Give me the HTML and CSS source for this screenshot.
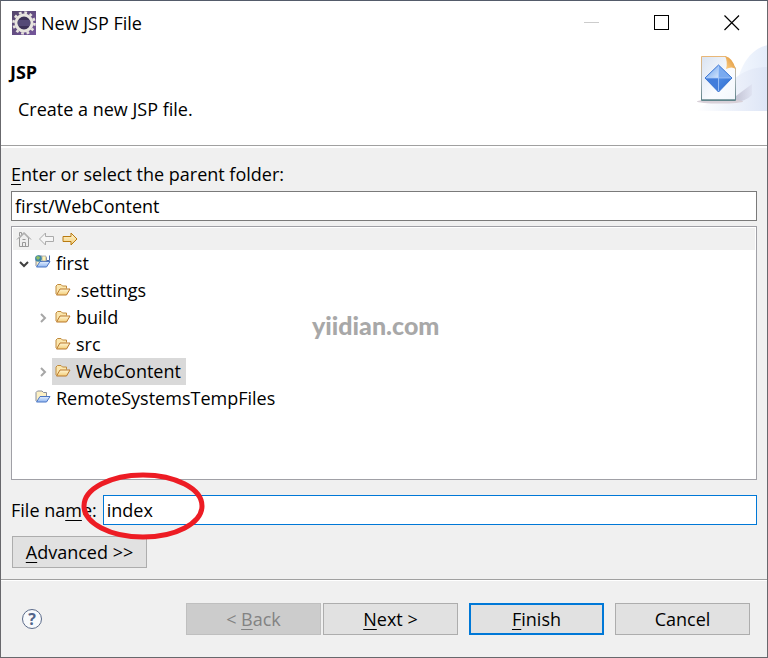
FILE: index.html
```html
<!DOCTYPE html>
<html lang="en">
<head>
<meta charset="utf-8">
<title>New JSP File</title>
<link rel="stylesheet" href="styles.css">
</head>
<body>
<svg class="defs" aria-hidden="true">
  <defs>
    <linearGradient id="gold" x1="0" y1="0" x2="0" y2="1"><stop offset="0" stop-color="#fff6d5"/><stop offset="1" stop-color="#f3cd78"/></linearGradient>
    <linearGradient id="blue" x1="0" y1="0" x2="0" y2="1"><stop offset="0" stop-color="#e3efff"/><stop offset="1" stop-color="#8fb5f0"/></linearGradient>
    <symbol id="folder" viewBox="0 0 16 12">
      <path d="M1 10.500V2.500L2.500 1H6L7.500 2.500H11.500V5" fill="#fbe6ad" stroke="#c08a3c"/>
      <path d="M1.500 11.500 5 5.500H15L11.500 11.500Z" fill="url(#gold)" stroke="#b9782c" stroke-linejoin="round"/>
    </symbol>
    <symbol id="project" viewBox="0 0 16 13">
      <path d="M1 11V2.500L2.500 1H7L8.500 2.500H11.500V6" fill="#fdf0c4" stroke="#8a8f9c"/>
      <path d="M1.500 12 5 6.500H15L11.500 12Z" fill="url(#blue)" stroke="#4b76c4" stroke-linejoin="round"/>
    </symbol>
    <symbol id="closed" viewBox="0 0 8 10"><path d="M2 1 6 5 2 9" fill="none" stroke="#a6a6a6" stroke-width="2"/></symbol>
  </defs>
</svg>
<main class="dialog">
  <header class="titlebar">
    <svg class="app-icon" viewBox="0 0 24 24" aria-hidden="true">
      <defs><linearGradient id="app" x1="0" y1="0" x2="1" y2="1"><stop offset="0" stop-color="#54466a"/><stop offset="1" stop-color="#75569c"/></linearGradient></defs>
      <rect width="24" height="24" fill="url(#app)"/>
      <circle cx="12" cy="12" r="10.500" fill="none" stroke="#e8e5df" stroke-width="2.500" stroke-dasharray="2.750 2.748"/>
      <circle cx="12" cy="12" r="8" fill="#3c3157" stroke="#e8e5df" stroke-width="3"/>
      <path d="M6 10H18M5.500 12H18.500M6 14H18" stroke="#6d6396"/>
    </svg>
    <h1 class="title">New JSP File</h1>
    <button class="caption" aria-label="Minimize" disabled><svg viewBox="0 0 16 16"><path d="M0 7.500H15" stroke="#ccc"/></svg></button>
    <button class="caption" aria-label="Maximize"><svg viewBox="0 0 16 16"><rect x=".5" y=".5" width="14" height="14" fill="none" stroke="#000"/></svg></button>
    <button class="caption" aria-label="Close"><svg viewBox="0 0 16 16"><path d="M.5.5 15 15M15 .5.5 15" stroke="#000" stroke-width="1.200"/></svg></button>
  </header>
  <section class="banner">
    <div class="intro">
      <h2 class="heading">JSP</h2>
      <p class="summary">Create a new JSP file.</p>
    </div>
    <svg class="banner-art" viewBox="0 0 77 70" aria-hidden="true">
      <defs>
        <linearGradient id="swoosh" x1="0" x2="1"><stop offset="0" stop-color="#fff"/><stop offset="1" stop-color="#dde5f6"/></linearGradient>
        <linearGradient id="swoosh2" x1="0" x2="1"><stop offset="0" stop-color="#f4f8fe"/><stop offset="1" stop-color="#e4ecfa"/></linearGradient>
        <linearGradient id="shade" x1="0" x2="1"><stop offset="0" stop-color="#aaa8bd"/><stop offset="1" stop-color="#dcdeee"/></linearGradient>
        <linearGradient id="page" x1="0" y1="0" x2="1" y2="1"><stop offset="0" stop-color="#d9e3f1"/><stop offset=".6" stop-color="#fafcff"/><stop offset="1" stop-color="#f3f7fc"/></linearGradient>
        <linearGradient id="edge" x1="0" y1="0" x2="0" y2="1"><stop offset="0" stop-color="#e9b777"/><stop offset=".5" stop-color="#a9b3b6"/><stop offset="1" stop-color="#5e8289"/></linearGradient>
        <linearGradient id="curl" x1="0" y1="1" x2="1" y2="0"><stop offset="0" stop-color="#ffd28a"/><stop offset="1" stop-color="#d98b2c"/></linearGradient>
        <linearGradient id="gemA" x1="0" y1="0" x2="1" y2="1"><stop offset="0" stop-color="#5f9aec"/><stop offset="1" stop-color="#d3e5fc"/></linearGradient>
        <linearGradient id="gemB" x1="0" y1="0" x2="1" y2="1"><stop offset="0" stop-color="#4f8be4"/><stop offset="1" stop-color="#2a69cc"/></linearGradient>
      </defs>
      <path d="M44 66C44 24 60 3 78 0V66Z" fill="url(#swoosh2)"/>
      <path d="M6 66C35 50 42 22 78 22V66Z" fill="url(#swoosh)"/>
      <path d="M46 56V51L62 39V50Q56 56 46 57Z" fill="url(#shade)" opacity=".6"/>
      <ellipse cx="30" cy="56.500" rx="23" ry="2" fill="#d8d0d8"/>
      <path d="M11.500 11.500H36L45.500 23V55.500H11.500Z" fill="url(#page)" stroke="url(#edge)"/>
      <path d="M12 55H45" stroke="#60858b" stroke-width="1.500"/>
      <path d="M35 11Q43 13 45.500 24Q42 21 36 24Q38 17 35 11Z" fill="url(#curl)"/>
      <path d="M28.500 20V33H15Z" fill="url(#gemA)"/>
      <path d="M28.500 20 42 33H28.500Z" fill="#79aaf0"/>
      <path d="M15 33H28.500V47Z" fill="#427ddb"/>
      <path d="M28.500 33H42L28.500 47Z" fill="url(#gemB)"/>
      <path d="M28.500 20 42 33 28.500 47 15 33Z" fill="none" stroke="#3a75d3"/>
      <path d="M16 33H41M28.500 21V46" stroke="#a6c9fb" stroke-width=".7"/>
    </svg>
  </section>
  <section class="content">
    <label class="label" for="parent"><u>E</u>nter or select the parent folder:</label>
    <input class="field" id="parent" type="text" value="first/WebContent">
    <div class="browser">
      <div class="toolbar">
        <button class="tool" aria-label="Home" disabled><svg viewBox="0 0 16 16"><path d="M3.500 7V15.500H12.500V7L8 2.500Z" fill="#eee" stroke="#999"/><path d="M1 8.500 8 1.500 15 8.500M3.500 5V1.500H5.500V3.500" fill="none" stroke="#999"/><path d="M6.500 15V11.500H9.500V15M6.500 8.500H9.500" fill="none" stroke="#999"/></svg></button>
        <button class="tool" aria-label="Back" disabled><svg viewBox="0 0 16 16"><path d="M.5 8 6.500 2V5.500H14.500V10.500H6.500V14Z" fill="#f5f5f5" stroke="#aaa" stroke-linejoin="round"/></svg></button>
        <button class="tool" aria-label="Forward"><svg viewBox="0 0 16 16"><path d="M15 8 9 2V5.500H1V10.500H9V14Z" fill="url(#gold)" stroke="#b87a10" stroke-linejoin="round"/></svg></button>
      </div>
      <ul class="tree">
        <li>
          <div class="row"><svg class="twisty" viewBox="0 0 12 10"><path d="M2 3 6 7 10 3" fill="none" stroke="#404040" stroke-width="2"/></svg><span class="item"><svg class="node-icon raised" viewBox="0 0 16 13"><use href="#project"/><path d="M7 1H11V6H7Z" fill="#fff3b0" stroke="#8f98aa" stroke-width=".7"/><path d="M14.500 .5V5.500H12" fill="none" stroke="#4c6fae"/><circle cx="3.500" cy="3.500" r="3.300" fill="#3f86a8"/><path d="M2 1Q5 1 5 3L3 5 1 3Z" fill="#8fbd63"/></svg>first</span></div>
          <ul class="branch">
            <li><div class="row"><span class="twisty"></span><span class="item"><svg class="node-icon"><use href="#folder"/></svg>.settings</span></div></li>
            <li><div class="row"><svg class="twisty"><use href="#closed"/></svg><span class="item"><svg class="node-icon"><use href="#folder"/></svg>build</span></div></li>
            <li><div class="row"><span class="twisty"></span><span class="item"><svg class="node-icon"><use href="#folder"/></svg>src</span></div></li>
            <li><div class="row"><svg class="twisty"><use href="#closed"/></svg><span class="item selected"><svg class="node-icon"><use href="#folder"/></svg>WebContent</span></div></li>
          </ul>
        </li>
        <li><div class="row"><span class="twisty"></span><span class="item"><svg class="node-icon raised"><use href="#project"/></svg>RemoteSystemsTempFiles</span></div></li>
      </ul>
      <span class="watermark">yiidian.com</span>
    </div>
    <div class="file-row">
      <label class="label" for="file">File na<u>m</u>e:</label>
      <input class="field active" id="file" type="text" value="index">
      <svg class="marker" viewBox="0 0 124 70" aria-hidden="true"><ellipse cx="62" cy="35" rx="59" ry="31" fill="none" stroke="#ed1c24" stroke-width="5"/></svg>
    </div>
    <button class="button advanced"><span><u>A</u>dvanced &gt;&gt;</span></button>
  </section>
  <footer class="footer">
    <button class="help" aria-label="Help">?</button>
    <div class="steps">
      <button class="button" disabled><span>&lt; <u>B</u>ack</span></button>
      <button class="button"><span><u>N</u>ext &gt;</span></button>
    </div>
    <button class="button primary"><span><u>F</u>inish</span></button>
    <button class="button"><span>Cancel</span></button>
  </footer>
</main>
</body>
</html>
```
FILE: styles.css
```css
* { box-sizing: border-box; }
body, h1, h2, p, ul { margin: 0; padding: 0; }
body, button, input {
  font-family: "Open Sans", "Noto Sans", sans-serif;
  font-size: 18px;
  line-height: 24px;
  color: #000;
}
ul { list-style: none; }
svg { display: block; }
button { padding: 0; border: 0; background: none; }
u { text-decoration-thickness: 1px; text-underline-offset: 3px; text-decoration-skip-ink: none; }
.defs { position: absolute; width: 0; height: 0; }

.dialog {
  display: flex;
  flex-direction: column;
  min-height: 100vh;
  border: 1px solid #68686c;
  border-top-color: #535b6a;
  background: #f0f0f0;
}

.titlebar { display: flex; align-items: center; height: 43px; padding-left: 11px; background: #fff; }
.app-icon { width: 24px; height: 24px; }
.title { flex: 1; padding-left: 5px; font-size: 18px; font-weight: 400; }
.caption { display: grid; place-items: center; width: 70px; height: 44px; }
.caption svg { width: 16px; height: 16px; }

.banner {
  display: flex;
  justify-content: space-between;
  height: 102px;
  background: #fff;
  border-bottom: 1px solid #a0a0a0;
}
.intro { padding: 16px 0 0 9px; }
.heading { font-size: 18px; font-weight: 700; }
.summary { padding: 13px 0 0 8px; }
.banner-art { width: 77px; height: 70px; margin-top: 1px; }

.content {
  display: flex;
  flex: 1;
  flex-direction: column;
  padding: 14px 10px 11px;
  border-top: 2px solid #fff;
}
.field {
  width: 100%;
  height: 30px;
  padding: 0 3px;
  border: 1px solid #7a7a7a;
  border-radius: 0;
  background: #fff;
  outline: 0;
}
.field.active { border-color: #0078d7; }
.content > .field { margin-top: 5px; }

.browser {
  position: relative;
  flex: 1;
  min-height: 240px;
  margin: 5px 0 15px;
  padding: 1px;
  border: 1px solid #a0a0a6;
  background: #fff;
}
.toolbar { display: flex; gap: 7px; height: 22px; padding: 3px; background: #f0f0f0; }
.tool, .tool svg { width: 16px; height: 16px; }
.row { display: flex; align-items: center; height: 27px; padding-left: 5px; }
.branch { padding-left: 19px; }
.twisty { width: 12px; height: 10px; }
.item { display: flex; align-items: center; gap: 5px; height: 27px; margin-left: 2px; padding: 0 5px 2px 3px; }
.branch .item { margin-left: 3px; }
.item.selected { background: #d9d9d9; }
.node-icon { width: 16px; height: 13px; }
.raised { margin-bottom: 3px; }
.watermark {
  position: absolute;
  left: 300px;
  top: 82px;
  font: 900 25px/32px Lato, sans-serif;
  color: #a8a8a8;
}

.file-row { position: relative; display: flex; align-items: center; gap: 6px; }
.file-row .label { flex: none; }
.file-row .field { flex: 1; }
.marker { position: absolute; left: 70px; top: -24px; width: 124px; height: 70px; pointer-events: none; }

.button {
  display: grid;
  place-items: center;
  width: 135px;
  height: 32px;
  border: 1px solid #adadad;
  background: #e1e1e1;
}
.button:disabled { border-color: #bfbfbf; background: #ccc; color: #838383; }
.button.primary { border: 2px solid #0078d7; }
.advanced { margin: 11px 0 0 1px; }

.footer {
  display: flex;
  align-items: center;
  gap: 11px;
  height: 78px;
  padding: 0 17px 0 21px;
  border-top: 1px solid #a0a0a0;
  box-shadow: inset 0 1px #fff;
}
.help {
  width: 20px;
  height: 20px;
  margin-right: auto;
  border: 1px solid #5b6b8a;
  border-radius: 50%;
  background: #f8fafc;
  color: #52658a;
  font-size: 16px;
  font-weight: 700;
  line-height: 18px;
}
.steps { display: flex; gap: 2px; }
```
